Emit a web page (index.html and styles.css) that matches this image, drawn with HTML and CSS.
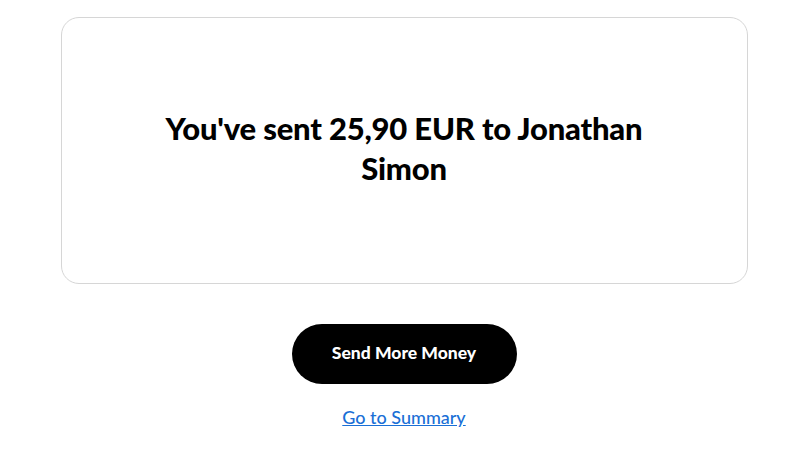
FILE: index.html
```html
<!DOCTYPE html>
<html lang="en">
<head>
    <meta charset="UTF-8">
    <meta name="viewport" content="width=device-width, initial-scale=1.0">
    <title>Payment Sent</title>
    <link rel="stylesheet" href="styles.css">
</head>
<body>
    <div class="page">
        <div class="result-card">
            <h1 class="result-title">You've sent 25,90 EUR to Jonathan Simon</h1>
        </div>
        <button class="send-button">Send More Money</button>
        <a class="summary-link" href="#">Go to Summary</a>
    </div>
</body>
</html>
```

FILE: styles.css
```css
body {
    margin: 0;
    font-family: Lato, "Noto Sans", sans-serif;
    background-color: #fff;
    color: #000;
}
.page {
    display: flex;
    flex-direction: column;
    align-items: center;
    padding-top: 17px;
    padding-left: 18px;
}
.result-card {
    box-sizing: border-box;
    width: 687px;
    height: 267px;
    padding-bottom: 5px;
    border: 1px solid #d6d6d6;
    border-radius: 18px;
    display: flex;
    align-items: center;
    justify-content: center;
}
.result-title {
    max-width: 500px;
    margin: 0;
    font-size: 31px;
    font-weight: 900;
    line-height: 40px;
    letter-spacing: -0.2px;
    text-align: center;
}
.send-button {
    margin-top: 40px;
    width: 225px;
    height: 60px;
    padding-bottom: 4px;
    border: none;
    border-radius: 30px;
    background-color: #000;
    color: #fff;
    font-family: inherit;
    font-size: 17.5px;
    font-weight: 900;
    cursor: pointer;
}
.summary-link {
    margin-top: 22px;
    color: #1a6fd6;
    font-size: 18px;
    font-weight: 500;
    text-decoration: underline;
}
```
